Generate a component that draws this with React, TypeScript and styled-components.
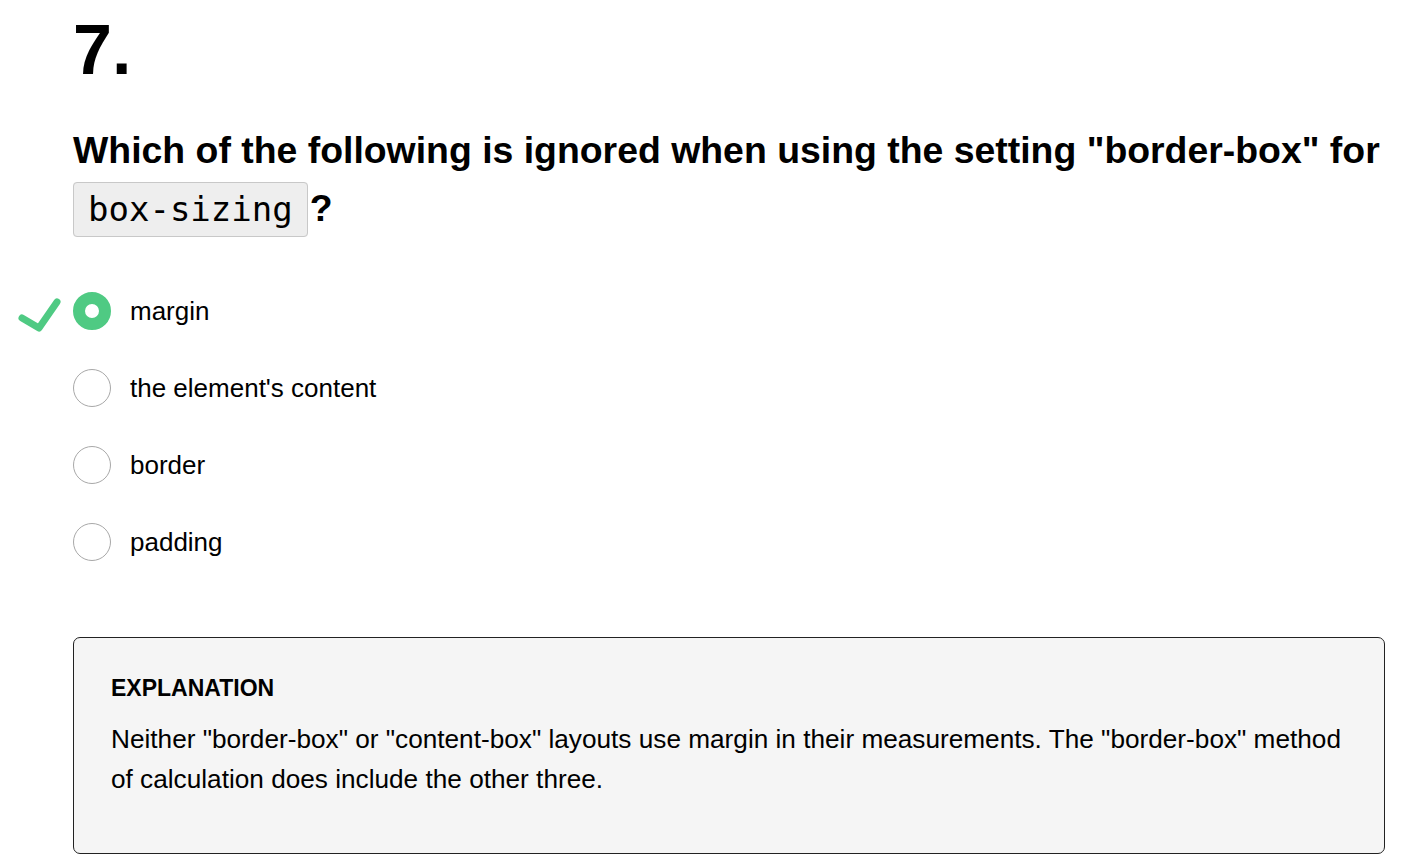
import React from "react";
import styled, { createGlobalStyle } from "styled-components";

const Global = createGlobalStyle`
  html, body { margin: 0; padding: 0; background: #fff; }
  body { font-family: "Liberation Sans", Arial, sans-serif; color: #000; }
`;

const Page = styled.main`
  padding: 0 17px 0 73px;
`;

const Number = styled.h1`
  margin: 0;
  padding-top: 12px;
  font-size: 70px;
  line-height: 76px;
  font-weight: 700;
`;

const Question = styled.h2`
  margin: 33px -12px 0 0;
  font-size: 37.4px;
  line-height: 58px;
  font-weight: 700;
`;

const Code = styled.code`
  font-family: "DejaVu Sans Mono", monospace;
  font-weight: 400;
  font-size: 34px;
  background: #eeeeee;
  border: 1px solid #c8c8c8;
  border-radius: 4px;
  padding: 6px 14px 7px;
  margin-right: 2px;
`;

const Options = styled.ul`
  list-style: none;
  margin: 54px 0 0;
  padding: 0;
  display: flex;
  flex-direction: column;
  gap: 39px;
`;

const Option = styled.li`
  position: relative;
  display: flex;
  align-items: center;
  gap: 19px;
  height: 38px;
  font-size: 26px;
`;

const Radio = styled.span<{ $checked?: boolean }>`
  box-sizing: border-box;
  width: 38px;
  height: 38px;
  border-radius: 50%;
  flex: none;
  background: #fff;
  border: ${(p) => (p.$checked ? "12px solid #4fca83" : "1px solid #a8a8a8")};
`;

const Check = styled.svg`
  position: absolute;
  left: -57px;
  top: 3px;
`;

const Label = styled.span`
  line-height: 30px;
`;

const Explanation = styled.section`
  margin-top: 76px;
  box-sizing: border-box;
  background: #f5f5f5;
  border: 1px solid #222;
  border-radius: 7px;
  padding: 36px 37px 54px;
`;

const ExplTitle = styled.h3`
  margin: 0;
  font-size: 23px;
  line-height: 28px;
  font-weight: 700;
  text-transform: uppercase;
`;

const ExplText = styled.p`
  margin: 17px 0 0;
  font-size: 26.2px;
  line-height: 40px;
`;

const options = ["margin", "the element's content", "border", "padding"];

export default function App() {
  return (
    <>
      <Global />
      <Page>
        <Number>7.</Number>
        <Question>
          Which of the following is ignored when using the setting "border-box" for{" "}
          <Code>box-sizing</Code>?
        </Question>
        <Options>
          {options.map((o, i) => (
            <Option key={o}>
              {i === 0 && (
                <Check width="46" height="40" viewBox="0 0 46 40">
                  <path
                    d="M6 23 L23 33 L41 7"
                    fill="none"
                    stroke="#4fca83"
                    strokeWidth="7"
                    strokeLinecap="round"
                    strokeLinejoin="round"
                  />
                </Check>
              )}
              <Radio $checked={i === 0} />
              <Label>{o}</Label>
            </Option>
          ))}
        </Options>
        <Explanation>
          <ExplTitle>Explanation</ExplTitle>
          <ExplText>
            Neither "border-box" or "content-box" layouts use margin in their measurements. The
            "border-box" method of calculation does include the other three.
          </ExplText>
        </Explanation>
      </Page>
    </>
  );
}
